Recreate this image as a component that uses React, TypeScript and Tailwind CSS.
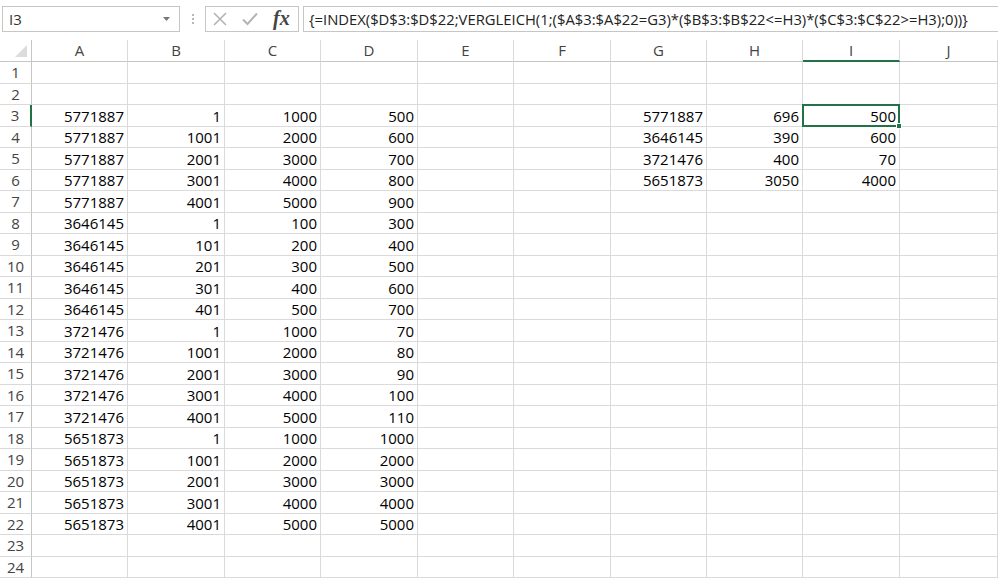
import React from 'react';

const COLS = ['A', 'B', 'C', 'D', 'E', 'F', 'G', 'H', 'I', 'J'];
const COL_W = ['w-[96px]', 'w-[97px]', 'w-[96px]', 'w-[97px]', 'w-[96px]', 'w-[97px]', 'w-[96px]', 'w-[96px]', 'w-[97px]', 'w-[98px]'];

const FORMULA = '{=INDEX($D$3:$D$22;VERGLEICH(1;($A$3:$A$22=G3)*($B$3:$B$22<=H3)*($C$3:$C$22>=H3);0))}';

// row number -> values by column letter
const DATA: Record<number, Record<string, string>> = {};
const left: [string, string, string, string][] = [
  ['5771887', '1', '1000', '500'],
  ['5771887', '1001', '2000', '600'],
  ['5771887', '2001', '3000', '700'],
  ['5771887', '3001', '4000', '800'],
  ['5771887', '4001', '5000', '900'],
  ['3646145', '1', '100', '300'],
  ['3646145', '101', '200', '400'],
  ['3646145', '201', '300', '500'],
  ['3646145', '301', '400', '600'],
  ['3646145', '401', '500', '700'],
  ['3721476', '1', '1000', '70'],
  ['3721476', '1001', '2000', '80'],
  ['3721476', '2001', '3000', '90'],
  ['3721476', '3001', '4000', '100'],
  ['3721476', '4001', '5000', '110'],
  ['5651873', '1', '1000', '1000'],
  ['5651873', '1001', '2000', '2000'],
  ['5651873', '2001', '3000', '3000'],
  ['5651873', '3001', '4000', '4000'],
  ['5651873', '4001', '5000', '5000'],
];
left.forEach((r, i) => {
  DATA[i + 3] = { A: r[0], B: r[1], C: r[2], D: r[3] };
});
const lookup: [string, string, string][] = [
  ['5771887', '696', '500'],
  ['3646145', '390', '600'],
  ['3721476', '400', '70'],
  ['5651873', '3050', '4000'],
];
lookup.forEach((r, i) => {
  DATA[i + 3] = { ...DATA[i + 3], G: r[0], H: r[1], I: r[2] };
});

const FormulaBar = () => (
  <div className="h-[40px] flex items-start pt-[6px] pl-[2px] bg-white">
    <div className="w-[178px] h-[26px] border border-[#c6c6c6] flex items-center pl-[6px] pr-[9px] text-[15px] text-[#333]">
      <span className="flex-1">I3</span>
      <svg width="7" height="4" viewBox="0 0 7 4"><path d="M0 0h7L3.5 4z" fill="#777" /></svg>
    </div>
    <div className="w-[25px] h-[26px] flex flex-col items-center justify-center gap-[2px]">
      <span className="w-[2px] h-[2px] bg-[#b8b8b8]" />
      <span className="w-[2px] h-[2px] bg-[#b8b8b8]" />
      <span className="w-[2px] h-[2px] bg-[#b8b8b8]" />
    </div>
    <div className="w-[94px] h-[26px] border border-[#c6c6c6] flex items-center pl-[7px] gap-[15px]">
      <svg width="14" height="14" viewBox="0 0 14 14">
        <path d="M1 1L13 13M13 1L1 13" stroke="#b4b4b4" strokeWidth="1.6" />
      </svg>
      <svg width="16" height="14" viewBox="0 0 16 14">
        <path d="M1 7.5L5.5 12L15 1.5" stroke="#b4b4b4" strokeWidth="2" fill="none" />
      </svg>
      <span className="text-[20px] italic font-bold leading-none text-[#444] font-['Liberation_Serif',serif] -mt-[2px]">fx</span>
    </div>
    <div className="flex-1 h-[26px] ml-[4px] border border-r-0 border-[#c6c6c6] flex items-center pl-[5px] text-[14.8px] text-[#222] whitespace-nowrap overflow-hidden">
      {FORMULA}
    </div>
  </div>
);

const Corner = () => (
  <div className="w-[32px] h-full border-r border-b border-[#c6c6c6] flex items-end justify-end pr-[4px] pb-[4px]">
    <svg width="12" height="12" viewBox="0 0 12 12"><path d="M12 0V12H0z" fill="#dcdcdc" /></svg>
  </div>
);

export default function App() {
  return (
    <div className="w-[998px] h-[581px] overflow-hidden bg-white font-['Open_Sans',sans-serif]">
      <FormulaBar />
      <div className="flex h-[22px]">
        <Corner />
        {COLS.map((c, i) => (
          <div
            key={c}
            className={`${COL_W[i]} h-full border-r border-[#d9d9d9] flex items-center justify-center text-[15px] text-[#444] ${
              c === 'I' ? 'border-b-2 border-b-[#217346]' : 'border-b border-b-[#c6c6c6]'
            }`}
          >
            {c}
          </div>
        ))}
      </div>
      {Array.from({ length: 24 }, (_, i) => i + 1).map((r, i) => (
        <div key={r} className={`flex ${i % 2 === 0 ? 'h-[22px]' : 'h-[21px]'}`}>
          <div
            className={`w-[32px] h-full border-b border-[#d9d9d9] flex items-center justify-center text-[15px] text-[#444] ${
              r === 3 ? 'border-r-2 border-r-[#217346]' : 'border-r border-r-[#c6c6c6]'
            }`}
          >
            {r}
          </div>
          {COLS.map((c, ci) => {
            const v = DATA[r]?.[c];
            const sel = r === 3 && c === 'I';
            return (
              <div
                key={c}
                className={`${COL_W[ci]} h-full border-r border-b border-[#dadada] flex items-center justify-end pr-[3px] pt-[1px] text-[15px] text-black relative`}
              >
                {v}
                {sel && (
                  <>
                    <div className="absolute -left-[1px] -top-[1px] -right-[1px] -bottom-[1px] border-2 border-[#217346] z-10" />
                    <div className="absolute -right-[3px] -bottom-[3px] w-[6px] h-[6px] bg-[#217346] border border-white z-20" />
                  </>
                )}
              </div>
            );
          })}
        </div>
      ))}
    </div>
  );
}
